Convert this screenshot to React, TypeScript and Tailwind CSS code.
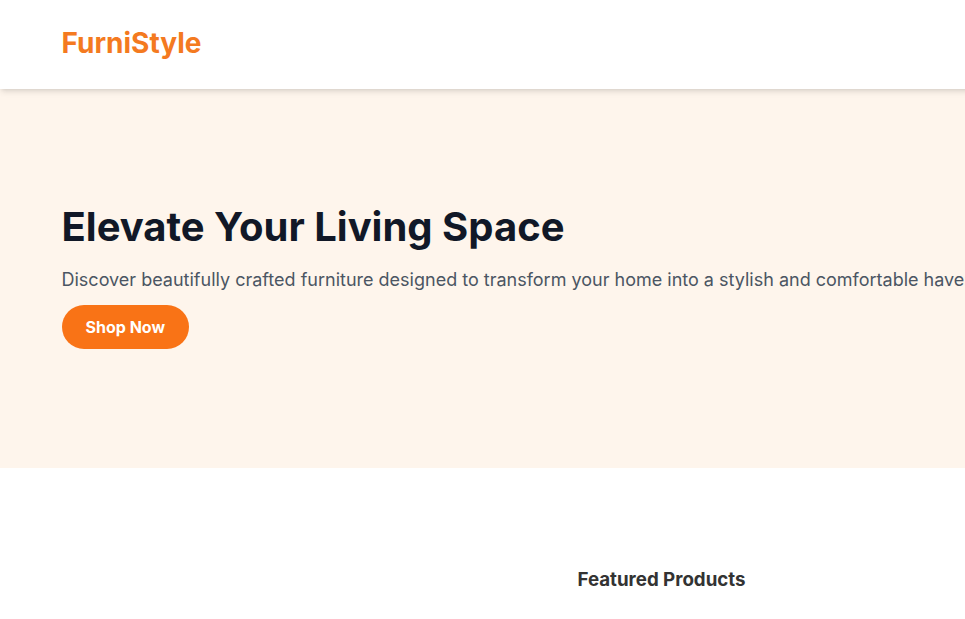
export default function App() {
  return (
    <div className="w-[1323px] bg-white font-['Inter','Noto_Sans',sans-serif]">
      <header className="relative z-10 bg-white shadow-md">
        <div className="mx-auto flex h-[89px] max-w-7xl items-center px-10 pb-1">
          <span className="text-[28px] font-bold leading-9 text-[#f47a20]">FurniStyle</span>
        </div>
      </header>

      <section className="bg-[#fef5ec]">
        <div className="mx-auto flex h-[379px] max-w-7xl flex-col justify-center px-10 pb-[6px]">
          <h1 className="mb-[15px] text-[40px] font-bold leading-[48px] text-[#111827]">
            Elevate Your Living Space
          </h1>
          <p className="mb-[11px] whitespace-nowrap text-lg leading-7 text-[#4b5563]">
            Discover beautifully crafted furniture designed to transform your home into a stylish and comfortable haven.
          </p>
          <div>
            <button className="rounded-full bg-[#f97316] px-6 py-2.5 text-base font-bold leading-6 text-white">
              Shop Now
            </button>
          </div>
        </div>
      </section>

      <section className="pt-[98px] pb-24">
        <div className="mx-auto max-w-7xl px-10">
          <h2 className="text-center text-[18.72px] font-bold leading-7 text-[#333333]">Featured Products</h2>
        </div>
      </section>
    </div>
  );
}
